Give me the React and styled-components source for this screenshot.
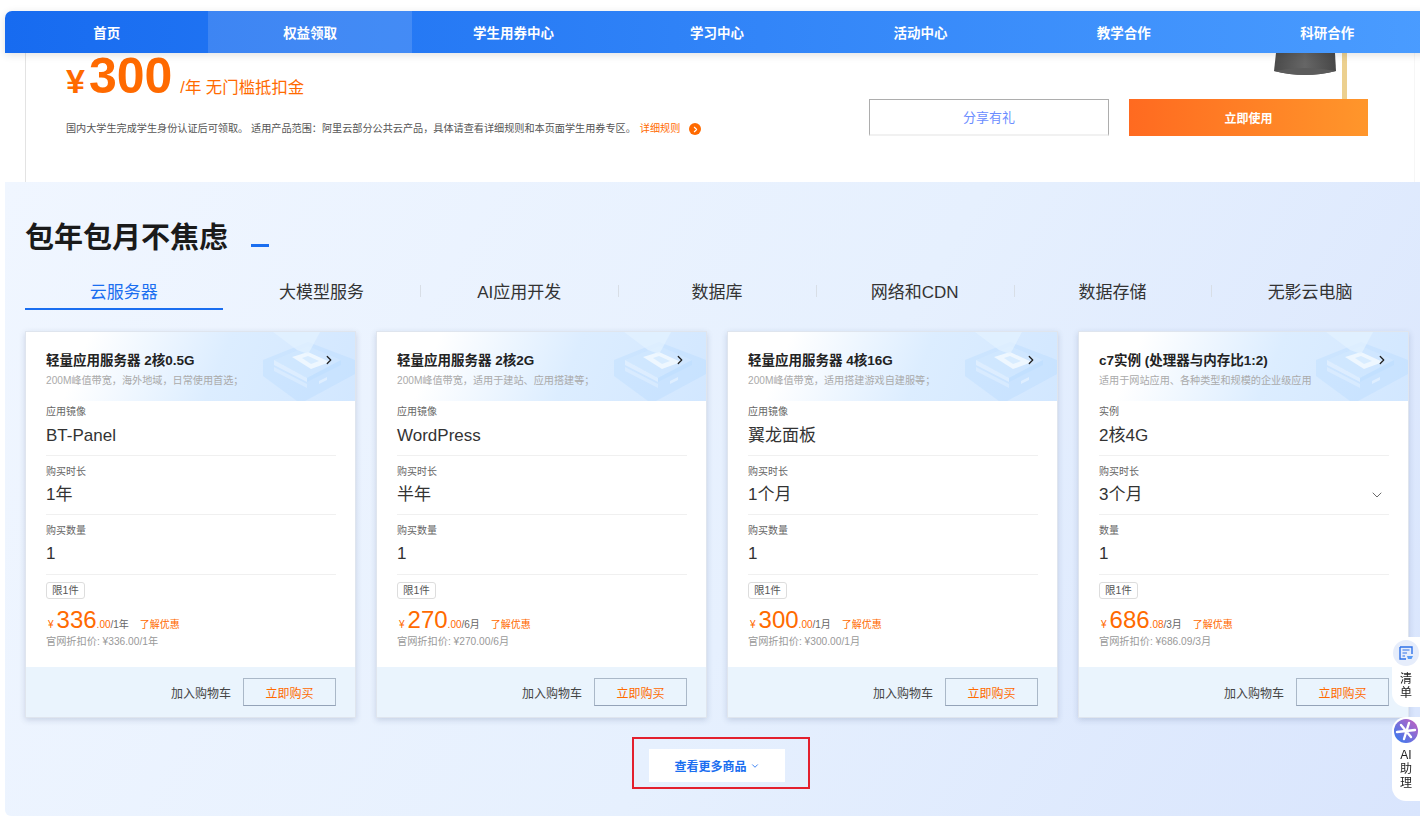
import React from "react";
import styled, { createGlobalStyle } from "styled-components";
import { ChevronRight, ChevronDown } from "lucide-react";

const navItems = ["首页", "权益领取", "学生用券中心", "学习中心", "活动中心", "教学合作", "科研合作"];
const tabs = ["云服务器", "大模型服务", "AI应用开发", "数据库", "网络和CDN", "数据存储", "无影云电脑"];
const products = [
  {
    title: "轻量应用服务器 2核0.5G",
    sub: "200M峰值带宽，海外地域，日常使用首选；",
    firstLabel: "应用镜像",
    first: "BT-Panel",
    period: "1年",
    countLabel: "购买数量",
    price: "336",
    cents: ".00",
    unit: "/1年",
    official: "官网折扣价: ¥336.00/1年",
  },
  {
    title: "轻量应用服务器 2核2G",
    sub: "200M峰值带宽，适用于建站、应用搭建等；",
    firstLabel: "应用镜像",
    first: "WordPress",
    period: "半年",
    countLabel: "购买数量",
    price: "270",
    cents: ".00",
    unit: "/6月",
    official: "官网折扣价: ¥270.00/6月",
  },
  {
    title: "轻量应用服务器 4核16G",
    sub: "200M峰值带宽，适用搭建游戏自建服等；",
    firstLabel: "应用镜像",
    first: "翼龙面板",
    period: "1个月",
    countLabel: "购买数量",
    price: "300",
    cents: ".00",
    unit: "/1月",
    official: "官网折扣价: ¥300.00/1月",
  },
  {
    title: "c7实例 (处理器与内存比1:2)",
    sub: "适用于网站应用、各种类型和规模的企业级应用",
    firstLabel: "实例",
    first: "2核4G",
    period: "3个月",
    countLabel: "数量",
    price: "686",
    cents: ".08",
    unit: "/3月",
    official: "官网折扣价: ¥686.09/3月",
    select: true,
  },
];

const GlobalStyle = createGlobalStyle`
  html, body {
    margin: 0;
    padding: 0;
    background: #fff;
    overflow: hidden;
  }
  body {
    font-family: "Liberation Sans", "Noto Sans CJK SC", sans-serif;
  }
  * {
    box-sizing: border-box;
  }
`;

const Page = styled.div`
  width: 1420px;
  height: 822px;
  padding: 11px 0 0 5px;
  overflow: hidden;
`;

const Nav = styled.nav`
  position: relative;
  z-index: 2;
  display: grid;
  grid-template-columns: repeat(7, 1fr);
  width: 1424px;
  height: 42px;
  border-radius: 7px 0 0 0;
  overflow: hidden;
  background: linear-gradient(90deg, #176bf0, #4a9cff);
  box-shadow: 0 2px 8px rgba(0, 0, 0, 0.12);
`;

const NavItem = styled.a`
  display: flex;
  align-items: center;
  justify-content: center;
  color: #fff;
  font-size: 13.5px;
  font-weight: 700;
  background: ${(p) => (p.$active ? "rgba(255,255,255,0.14)" : "transparent")};
`;

const Hero = styled.section`
  position: relative;
  display: flex;
  justify-content: space-between;
  height: 129px;
  margin: 0 5px 0 20px;
  padding: 0 46px 0 40px;
  border-left: 1px solid #e3e3e3;
  border-right: 1px solid #f6f6f6;
`;

const HeroText = styled.div`
  display: flex;
  flex-direction: column;
`;

const PriceLine = styled.div`
  display: flex;
  align-items: baseline;
  height: 46px;
  color: #ff6a00;
  line-height: 46px;
`;

const Yen = styled.span`
  font-size: 34px;
  font-weight: 700;
  margin-right: 4px;
`;

const BigPrice = styled.span`
  font-size: 50px;
  font-weight: 700;
  margin-right: 8px;
`;

const PriceNote = styled.span`
  font-size: 16.4px;
`;

const Rule = styled.div`
  display: flex;
  align-items: center;
  margin-top: 23px;
  font-size: 10.15px;
  line-height: 14px;
  color: #555;
  white-space: nowrap;
`;

const RuleLink = styled.span`
  color: #ff6a00;
  margin-left: 4px;
`;

const RuleDot = styled.span`
  display: flex;
  align-items: center;
  justify-content: center;
  width: 12px;
  height: 12px;
  margin-left: 9px;
  border-radius: 50%;
  background: #ff6a00;
  color: #fff;
`;

const HeroActions = styled.div`
  display: flex;
  gap: 20px;
  padding-top: 46px;
`;

const ShareButton = styled.a`
  display: flex;
  align-items: center;
  justify-content: center;
  width: 240px;
  height: 37px;
  padding-bottom: 1px;
  border: 1px solid #adadad;
  border-bottom: 2px solid #f1f1f1;
  color: #6b8dff;
  font-size: 13px;
`;

const UseButton = styled.a`
  display: flex;
  align-items: center;
  justify-content: center;
  width: 239px;
  height: 37px;
  background: linear-gradient(90deg, #ff6a20, #ff962b);
  color: #fff;
  font-size: 12px;
  font-weight: 700;
`;

const Hat = styled.svg`
  position: absolute;
  right: 61px;
  top: 0;
`;

const Section = styled.section`
  height: 634px;
  padding: 37px 11px 0 20px;
  background: linear-gradient(120deg, #f0f6ff 0%, #e6f0fe 55%, #d9e5fd 100%);
  border-radius: 0 0 0 6px;
`;

const HeadingRow = styled.div`
  display: flex;
  align-items: center;
  height: 38px;
`;

const Heading = styled.h2`
  margin: 0;
  font-size: 29px;
  line-height: 38px;
  font-weight: 700;
  color: #1a1a1a;
`;

const HeadingDash = styled.span`
  width: 18px;
  height: 3px;
  margin: 14px 0 0 23px;
  background: #1a6ef0;
`;

const TabBar = styled.div`
  display: grid;
  grid-template-columns: repeat(7, 1fr);
  margin-top: 15px;
`;

const Tab = styled.div`
  position: relative;
  display: flex;
  align-items: center;
  justify-content: center;
  height: 38px;
  font-size: 17px;
  color: ${(p) => (p.$active ? "#1a6ef0" : "#333")};
  border-bottom: 2px solid ${(p) => (p.$active ? "#1a6ef0" : "transparent")};

  &::after {
    content: "";
    display: ${(p) => (p.$divider ? "block" : "none")};
    position: absolute;
    right: -1px;
    top: 13px;
    width: 1px;
    height: 12px;
    background: #d8dee6;
  }
`;

const CardGrid = styled.div`
  display: grid;
  grid-template-columns: repeat(4, 331px);
  gap: 20px;
  margin-top: 21px;
`;

const Card = styled.article`
  height: 387px;
  display: flex;
  flex-direction: column;
  background: #fff;
  border: 1px solid #dfe5ee;
  box-shadow: 0 2px 6px rgba(40, 60, 110, 0.18);
`;

const CardHead = styled.div`
  position: relative;
  height: 69px;
  flex: none;
  padding: 20px 20px 0 20px;
  background: linear-gradient(112deg, #fff 18%, #dcedff 58%, #d2e7ff 100%);
  overflow: hidden;
`;

const CardArt = styled.svg`
  position: absolute;
  right: 0;
  top: 0;
`;

const CardTitle = styled.div`
  position: relative;
  font-size: 13.5px;
  line-height: 18px;
  font-weight: 700;
  color: #222;
  white-space: nowrap;
`;

const CardSub = styled.div`
  position: relative;
  margin-top: 4px;
  font-size: 10.15px;
  line-height: 14px;
  color: #aaa;
  white-space: nowrap;
`;

const HeadArrow = styled(ChevronRight)`
  position: absolute;
  right: 19px;
  top: 21px;
  color: #222;
`;

const CardBody = styled.div`
  flex: 1;
  padding: 0 19px 0 20px;
`;

const Field = styled.div`
  display: flex;
  flex-direction: column;
  height: ${(p) => p.$h}px;
  padding-top: ${(p) => (p.$first ? "4px" : "9px")};
  border-bottom: 1px solid #f0f0f0;
`;

const FieldLabel = styled.div`
  font-size: 10px;
  line-height: 14px;
  color: #666;
`;

const FieldValue = styled.div`
  display: flex;
  align-items: center;
  justify-content: space-between;
  margin-top: ${(p) => (p.$first ? "5px" : "4px")};
  font-size: 17px;
  line-height: 24px;
  color: #333;
`;

const SelectArrow = styled(ChevronDown)`
  margin-right: 4px;
  color: #444;
`;

const Tag = styled.span`
  display: inline-block;
  height: 17px;
  margin-top: 7px;
  padding: 0 5px;
  border: 1px solid #ddd;
  border-radius: 3px;
  font-size: 10.5px;
  line-height: 15px;
  color: #555;
`;

const PriceRow = styled.div`
  display: flex;
  align-items: baseline;
  height: 28px;
  line-height: 28px;
  margin-top: 7px;
  padding-left: 2px;
  color: #ff6a00;
`;

const PriceYen = styled.span`
  font-size: 10px;
  margin-right: 3px;
`;

const PriceMain = styled.span`
  font-size: 24px;
`;

const PriceCents = styled.span`
  font-size: 10px;
`;

const PriceUnit = styled.span`
  font-size: 10px;
  color: #666;
`;

const PriceLink = styled.span`
  font-size: 10px;
  margin-left: 11px;
`;

const Official = styled.div`
  margin-top: 1px;
  font-size: 10.2px;
  line-height: 14px;
  color: #999;
`;

const CardFoot = styled.div`
  flex: none;
  display: flex;
  align-items: center;
  justify-content: flex-end;
  gap: 12px;
  height: 50px;
  padding-right: 19px;
  background: #eaf4fd;
  font-size: 12px;
  color: #444;
`;

const BuyButton = styled.a`
  display: flex;
  align-items: center;
  justify-content: center;
  width: 93px;
  height: 28px;
  border: 1px solid #aab8c8;
  border-bottom-color: #94a3b8;
  color: #ff6a00;
`;

const MoreWrap = styled.div`
  display: flex;
  justify-content: center;
  margin: 19px 0 0 8px;
`;

const MoreOutline = styled.div`
  display: flex;
  width: 178px;
  height: 52px;
  padding: 10px 0 0 15px;
  border: 2px solid #e3202e;
`;

const MoreButton = styled.a`
  display: flex;
  align-items: center;
  justify-content: center;
  gap: 3px;
  width: 136px;
  height: 33px;
  background: #fff;
  color: #1a6ef0;
  font-size: 12px;
  font-weight: 700;
`;

const SideDock = styled.div`
  position: fixed;
  top: 637px;
  right: 0;
  display: flex;
  flex-direction: column;
  gap: 10px;
  width: 28px;
`;

const DockItem = styled.div`
  display: flex;
  flex-direction: column;
  align-items: center;
  height: ${(p) => p.$h}px;
  padding-top: 2px;
  background: #fff;
  border-radius: 14px 0 0 14px;
  font-size: 12px;
  line-height: 14px;
  color: #222;
  text-align: center;
`;

const DockLabel = styled.span`
  display: block;
  width: 14px;
  margin-top: 5px;
`;

function CapArt() {
  return (
    <Hat width="80" height="48" viewBox="0 0 80 48">
      <defs>
        <linearGradient id="capGrad" x1="0" y1="0" x2="1" y2="0">
          <stop offset="0" stopColor="#4a4a4a" />
          <stop offset="0.5" stopColor="#666" />
          <stop offset="1" stopColor="#474747" />
        </linearGradient>
      </defs>
      <path d="M3 0 H62 L63 18 Q32 26 1 18 Z" fill="url(#capGrad)" />
      <path d="M1 18 Q32 12 63 18 Q32 26 1 18 Z" fill="#5c5c5c" />
      <rect x="69" y="0" width="5" height="46" fill="#ecd08f" />
    </Hat>
  );
}

function ServerArt() {
  return (
    <CardArt width="94" height="69" viewBox="0 0 94 69">
      <polygon points="2,28 47,10 94,28 94,42 44,69 36,69 2,44" fill="#a9d2ff" opacity="0.25" />
      <polygon points="13,28 47,14 80,28 46,46" fill="#d4e9ff" opacity="0.55" />
      <polygon points="13,28 46,46 46,50 13,33" fill="#fff" opacity="0.35" />
      <polygon points="13,35 46,52 46,56 13,39" fill="#fff" opacity="0.25" />
      <polygon points="46,46 80,28 80,33 46,50" fill="#b8dbff" opacity="0.4" />
      <polygon points="31,25 47,20 69,30 50,37" fill="#f1f8ff" opacity="0.9" />
      <polygon points="41,26 47,24 58,29 50,32" fill="#d8ecff" />
      <polygon points="12,0 59,0 50,17 47,22 36,18" fill="#e4f2ff" opacity="0.7" />
      <polygon points="58,49 66,45 66,48 58,52" fill="#fff" opacity="0.4" />
    </CardArt>
  );
}

function ListIcon() {
  return (
    <svg width="28" height="28" viewBox="0 0 28 28">
      <circle cx="14" cy="14" r="13" fill="#e6edfb" />
      <path d="M8 8 H20 V15 M8 8 V20 H14" fill="none" stroke="#2f72e8" strokeWidth="1.4" />
      <path d="M10.5 11 H17.5 M10.5 14 H15 M10.5 17 H13" stroke="#2f72e8" strokeWidth="1.2" />
      <path d="M15 17 H21 L19.5 20 H16 Z" fill="#5a9bf5" />
    </svg>
  );
}

function AiIcon() {
  return (
    <svg width="24" height="24" viewBox="0 0 24 24">
      <defs>
        <linearGradient id="aiGrad" x1="1" y1="0" x2="0" y2="1">
          <stop offset="0" stopColor="#c65fc0" />
          <stop offset="1" stopColor="#2f7cf2" />
        </linearGradient>
      </defs>
      <circle cx="12" cy="12" r="12" fill="url(#aiGrad)" />
      <path d="M3 13 L21 11 M15 4 L10 20 M7 6 L17 18" stroke="#fff" strokeWidth="2.4" strokeLinecap="round" />
    </svg>
  );
}

function ProductCard({ item }) {
  return (
    <Card>
      <CardHead>
        <ServerArt />
        <CardTitle>{item.title}</CardTitle>
        <CardSub>{item.sub}</CardSub>
        <HeadArrow size={14} strokeWidth={2.2} />
      </CardHead>
      <CardBody>
        <Field $first $h={55}>
          <FieldLabel>{item.firstLabel}</FieldLabel>
          <FieldValue $first>{item.first}</FieldValue>
        </Field>
        <Field $h={59}>
          <FieldLabel>购买时长</FieldLabel>
          <FieldValue>
            {item.period}
            {item.select && <SelectArrow size={16} strokeWidth={1.2} />}
          </FieldValue>
        </Field>
        <Field $h={60}>
          <FieldLabel>{item.countLabel}</FieldLabel>
          <FieldValue>1</FieldValue>
        </Field>
        <Tag>限1件</Tag>
        <PriceRow>
          <PriceYen>¥</PriceYen>
          <PriceMain>{item.price}</PriceMain>
          <PriceCents>{item.cents}</PriceCents>
          <PriceUnit>{item.unit}</PriceUnit>
          <PriceLink>了解优惠</PriceLink>
        </PriceRow>
        <Official>{item.official}</Official>
      </CardBody>
      <CardFoot>
        加入购物车
        <BuyButton>立即购买</BuyButton>
      </CardFoot>
    </Card>
  );
}

export default function App() {
  return (
    <>
      <GlobalStyle />
      <Page>
        <Nav>
          {navItems.map((name, i) => (
            <NavItem key={name} $active={i === 1}>
              {name}
            </NavItem>
          ))}
        </Nav>
        <Hero>
          <CapArt />
          <HeroText>
            <PriceLine>
              <Yen>¥</Yen>
              <BigPrice>300</BigPrice>
              <PriceNote>/年 无门槛抵扣金</PriceNote>
            </PriceLine>
            <Rule>
              国内大学生完成学生身份认证后可领取。 适用产品范围：阿里云部分公共云产品，具体请查看详细规则和本页面学生用券专区。
              <RuleLink>详细规则</RuleLink>
              <RuleDot>
                <ChevronRight size={9} strokeWidth={3} />
              </RuleDot>
            </Rule>
          </HeroText>
          <HeroActions>
            <ShareButton>分享有礼</ShareButton>
            <UseButton>立即使用</UseButton>
          </HeroActions>
        </Hero>
        <Section>
          <HeadingRow>
            <Heading>包年包月不焦虑</Heading>
            <HeadingDash />
          </HeadingRow>
          <TabBar>
            {tabs.map((name, i) => (
              <Tab key={name} $active={i === 0} $divider={i > 0 && i < 6}>
                {name}
              </Tab>
            ))}
          </TabBar>
          <CardGrid>
            {products.map((item) => (
              <ProductCard key={item.title} item={item} />
            ))}
          </CardGrid>
          <MoreWrap>
            <MoreOutline>
              <MoreButton>
                查看更多商品
                <ChevronDown size={10} strokeWidth={2} />
              </MoreButton>
            </MoreOutline>
          </MoreWrap>
        </Section>
        <SideDock>
          <DockItem $h={70}>
            <ListIcon />
            <DockLabel>清单</DockLabel>
          </DockItem>
          <DockItem $h={84}>
            <AiIcon />
            <DockLabel>AI助理</DockLabel>
          </DockItem>
        </SideDock>
      </Page>
    </>
  );
}
